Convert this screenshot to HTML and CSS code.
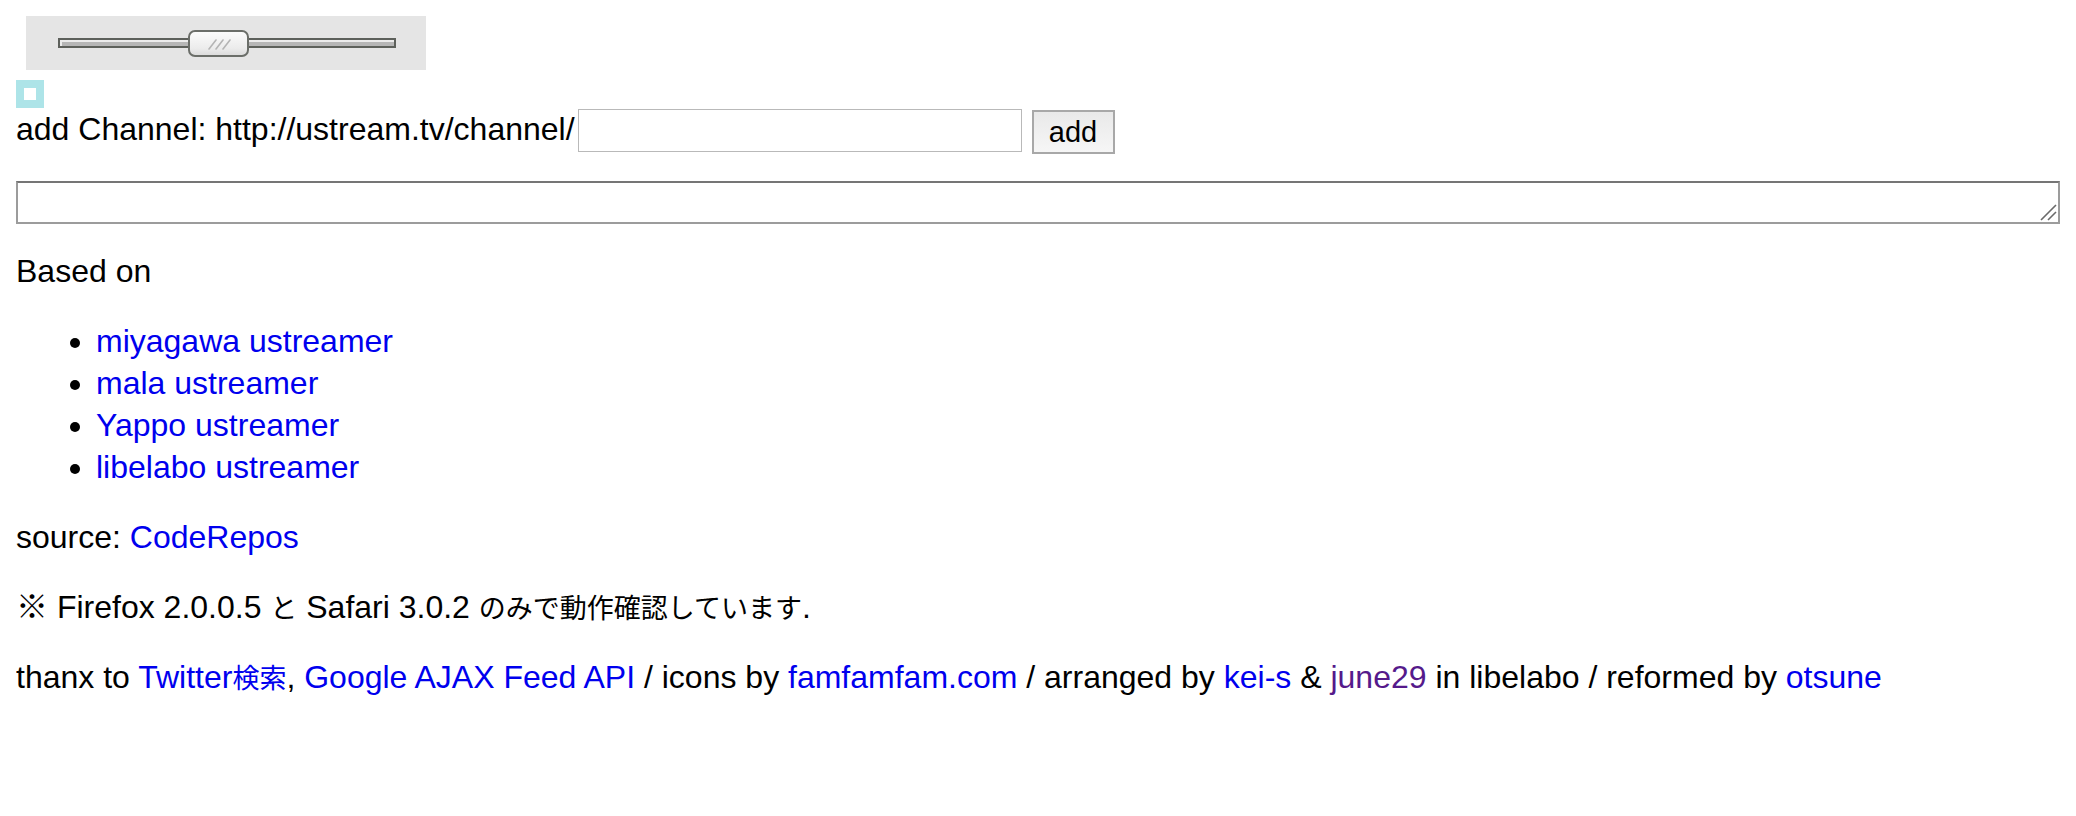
FILE: index.html
```html
<!DOCTYPE html>
<html lang="ja">
<head>
<meta charset="utf-8">
<title>ustreamer</title>
<link rel="stylesheet" href="styles.css">
</head>
<body>
<div class="slider">
  <div class="track">
    <div class="thumb">
      <svg class="grip-lines" width="30" height="14" viewBox="0 0 30 14">
        <path d="M5 12 L12 3 M12 12 L19 3 M19 12 L26 3" stroke="#b4b4b4" stroke-width="1.6" fill="none" stroke-linecap="round"/>
      </svg>
    </div>
  </div>
</div>
<div class="square"></div>
<div class="addrow">
  <span class="label">add Channel: http://ustream.tv/channel/</span>
  <input class="chan" type="text">
  <button class="addbtn" type="button">add</button>
</div>
<div class="areawrap">
  <textarea class="area"></textarea>
  <svg class="resize" width="18" height="18" viewBox="0 0 18 18">
    <path d="M2 17 L17 2 M9 17 L17 9" stroke="#6a6a6a" stroke-width="1.6" fill="none"/>
  </svg>
</div>
<p class="based">Based on</p>
<ul class="list">
  <li><a href="#">miyagawa ustreamer</a></li>
  <li><a href="#">mala ustreamer</a></li>
  <li><a href="#">Yappo ustreamer</a></li>
  <li><a href="#">libelabo ustreamer</a></li>
</ul>
<p>source: <a href="#">CodeRepos</a></p>
<p>※ Firefox 2.0.0.5 <span class="ja">と</span> Safari 3.0.2 <span class="ja">のみで動作確認しています</span>.</p>
<p>thanx to <a href="#">Twitter<span class="ja">検索</span></a>, <a href="#">Google AJAX Feed API</a> / icons by <a href="#">famfamfam.com</a> / arranged by <a href="#">kei-s</a> &amp; <a href="#" class="visited">june29</a> in libelabo / reformed by <a href="#">otsune</a></p>
</body>
</html>
```

FILE: styles.css
```css
html, body {
  background: #ffffff;
}
body {
  margin: 16px;
  font-family: "Liberation Sans", "Noto Sans CJK JP", sans-serif;
  font-size: 32px;
  line-height: 42px;
  color: #000000;
}
a {
  color: #0000ee;
  text-decoration: none;
}
a.visited {
  color: #551a8b;
}
.ja {
  font-family: "Noto Sans CJK JP", sans-serif;
  font-size: 27px;
}
.slider {
  display: flex;
  align-items: flex-start;
  width: 400px;
  height: 54px;
  box-sizing: border-box;
  margin-left: 10px;
  padding: 22px 0 0 32px;
  background: #e5e5e5;
}
.track {
  position: relative;
  width: 338px;
  height: 10px;
  box-sizing: border-box;
  border: 2px solid #5d605b;
  background: #b6b6b6;
  box-shadow: inset 2px 2px 0 #ececec;
}
.thumb {
  position: absolute;
  left: 128px;
  top: -10px;
  width: 61px;
  height: 27px;
  box-sizing: border-box;
  border: 2px solid #6b6e69;
  border-radius: 7px;
  background: linear-gradient(#fbfbfb, #ececec 70%, #dcdcdc);
  display: flex;
  align-items: center;
  justify-content: center;
}
.square {
  margin-top: 10px;
  width: 28px;
  height: 28px;
  box-sizing: border-box;
  border: 8px solid #ade4e8;
  background: #ffffff;
}
.addrow {
  display: flex;
  align-items: flex-start;
}
.label {
  white-space: nowrap;
}
.chan {
  margin: 1px 0 0 3px;
  width: 444px;
  height: 43px;
  box-sizing: border-box;
  border: 1px solid #b9b9b9;
  padding: 0 6px;
  font: inherit;
  background: #ffffff;
}
.addbtn {
  margin: 2px 0 0 10px;
  width: 83px;
  height: 44px;
  box-sizing: border-box;
  border: 2px solid #a8a8a8;
  background: linear-gradient(#e9e9e9, #f6f6f6);
  font-family: "Liberation Sans", sans-serif;
  font-size: 29px;
  color: #000000;
  padding: 0;
}
.areawrap {
  position: relative;
  margin-top: 27px;
}
.area {
  display: block;
  margin: 0;
  width: 100%;
  height: 43px;
  box-sizing: border-box;
  border: 2px solid #9c9c9c;
  border-top-color: #757575;
  padding: 0;
  resize: none;
  font: inherit;
  background: #ffffff;
}
.resize {
  position: absolute;
  right: 3px;
  bottom: 3px;
}
p {
  margin: 28px 0;
}
p.based {
  margin-top: 26px;
}
.list {
  margin: 28px 0;
  padding-left: 80px;
}
```
